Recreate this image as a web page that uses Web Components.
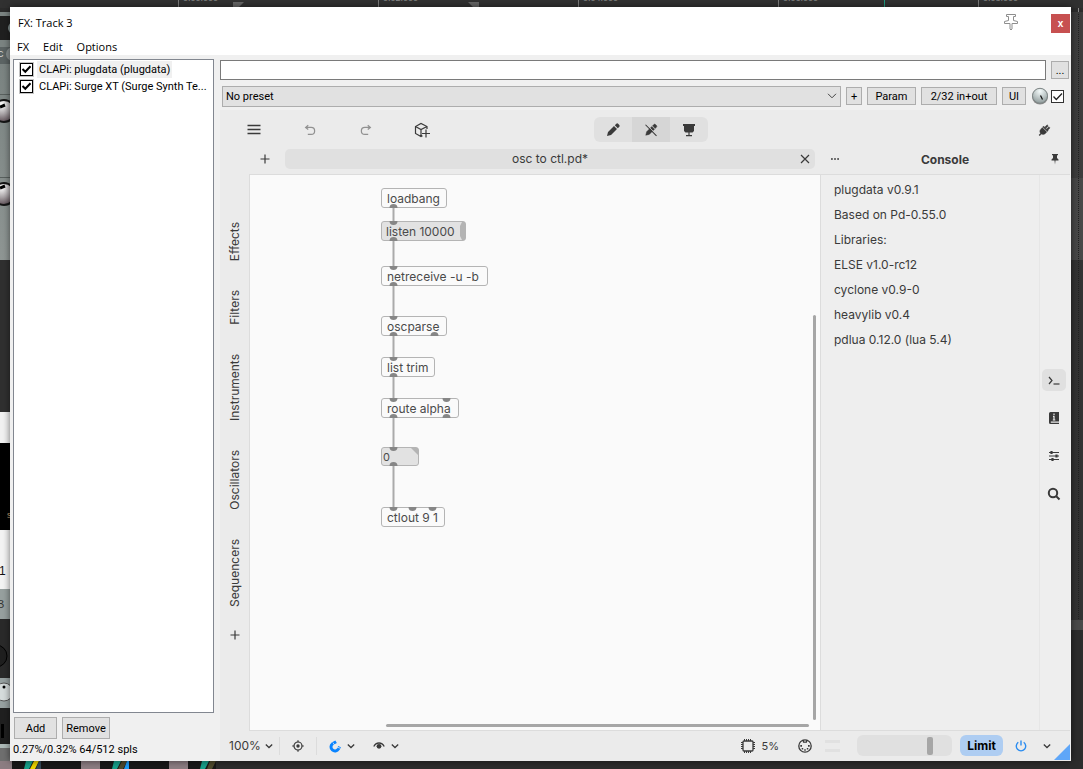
<!DOCTYPE html>
<html lang="en">
<head>
<meta charset="utf-8">
<title>FX: Track 3</title>
<style>
  html, body { height: 100%; margin: 0; }
  body { background: #2d2d2d; overflow: hidden; font-family: Roboto, "Liberation Sans", sans-serif; font-size: 11px; color: #000; }
</style>
</head>
<body>
<fx-desktop>
  <fx-window>
    <fx-titlebar slot="title">FX: Track 3</fx-titlebar>
    <fx-chain slot="chain" status="0.27%/0.32% 64/512 spls">
      <fx-item selected>CLAPi: plugdata (plugdata)</fx-item>
      <fx-item>CLAPi: Surge XT (Surge Synth Te...</fx-item>
    </fx-chain>
    <fx-presetbar slot="preset"></fx-presetbar>
    <pd-editor slot="plugin"></pd-editor>
  </fx-window>
</fx-desktop>

<script>
const RESET = `
  *, *::before, *::after { box-sizing: border-box; }
  button, input, select { font: inherit; color: inherit; margin: 0; }
  button { padding: 0; border: 0; background: none; display: grid; place-items: center; }
  svg { display: block; }
`;

function define(name, css, html) {
  const template = document.createElement('template');
  template.innerHTML = `<style>${RESET}${css}</style>${typeof html === 'string' ? html : ''}`;
  customElements.define(name, class extends HTMLElement {
    connectedCallback() {
      if (this.shadowRoot) return;
      const root = this.attachShadow({ mode: 'open' });
      root.append(template.content.cloneNode(true));
      if (typeof html === 'function') root.innerHTML += html(this);
    }
  });
}

/* ---------- icons ---------- */
const ICONS = {
  menu: '<path d="M1.500 3.500h13M1.500 7.500h13M1.500 11.500h13" stroke-width="1.500"/>',
  undo: '<path d="M6 2.500L3 5l3 2.500M3.500 5H9.300a4 4 0 0 1 0 8H5.500" stroke-width="1.400"/>',
  redo: '<path d="M10 2.500L13 5l-3 2.500M12.500 5H6.700a4 4 0 0 0 0 8H10.500" stroke-width="1.400"/>',
  cube: '<path d="M13 7V4.500L7 1.500 1.500 4.500v7L7 14.500l1.500-.8M1.500 4.500L7 7.500l6-3M7 7.500v7M12 7.500v8M8 11.500h8" stroke-width="1.200"/>',
  pencil: '<path d="M2 14l1-4 6-6 3 3-6 6zM9.800 3.200l1.500-1.500a1.300 1.300 0 0 1 1.800 0l1.200 1.200a1.300 1.300 0 0 1 0 1.800L12.800 6.200z" fill="currentColor" stroke="none"/>',
  pencilOff: '<path d="M2 14l1-4 6-6 3 3-6 6zM9.800 3.200l1.500-1.500a1.300 1.300 0 0 1 1.800 0l1.200 1.200a1.300 1.300 0 0 1 0 1.800L12.800 6.200z" fill="currentColor" stroke="currentColor" stroke-width=".5"/><path d="M2.600 1.400l12.500 12.500" stroke="#d6d6d6" stroke-width="1"/><path d="M1.700 2l12.600 12.600" stroke-width="1.200"/>',
  present: '<path d="M2 2h12v2h-1v5l-1.500 1.500h-7L3 9V4H2zM7.400 10h1.200v3H11v1.200H5V13h2.400z" fill="currentColor" stroke="none"/>',
  plug: '<path d="M2.200 13.800l1.800-2C2.500 9.500 3.200 8 5 6.200l1-1 5.200 5.200-1 1c-1.800 1.700-3.500 2.300-5.200 1.200l-1.800 1.900zM6.500 4.500l5.300 5.300 1-1-5.300-5.300zM9 4.600l2.600-2.600 1.300 1.300-2.600 2.600zM11 6.900l2.600-2.600 1.300 1.300-2.600 2.600z" fill="currentColor" stroke="currentColor" stroke-width=".4"/>',
  plus: '<path d="M8 3.500v9M3.500 8h9" stroke-width="1.200"/>',
  close: '<path d="M4 4l8 8M12 4l-8 8" stroke-width="1.200"/>',
  dots: '<path d="M4 7.300h1.800v1.500H4zM7.100 7.300h1.800v1.500H7.100zM10.200 7.300H12v1.500h-1.800z" fill="currentColor" stroke="none"/>',
  pin: '<path d="M5 3h6v1.300h-1V7l1.500 1.500v1h-3L8 13.500l-.5-4h-3v-1L6 7V4.300H5z" fill="currentColor" stroke="none"/>',
  terminal: '<path d="M3 5l3 3.500L3 12" stroke-width="1.200"/><path d="M7.500 12H13.500" stroke-width="1.200"/>',
  book: '<path d="M4.500 2H13v9.600H4.800v1.200H13V14H4.500A1.500 1.500 0 0 1 3 12.500v-9A1.500 1.500 0 0 1 4.500 2z" fill="currentColor" stroke="none"/><path d="M8 3.500v1.400M8 5.800V10M7 6.300h1M6.800 10h2.500" stroke="#eee" stroke-width="1.200"/>',
  sliders: '<path d="M3 4.500h10M3 8h10M3 11.500h10" stroke-width="1.200"/><path d="M5.500 3v3M10.500 6.500v3M6.500 10v3" stroke-width="2.200"/>',
  search: '<circle cx="7" cy="7" r="4.200" stroke-width="2"/><path d="M10 10l3.500 3.500" stroke-width="2"/>',
  chevron: '<path d="M4.800 6.500L8 9.500l3.200-3" stroke-width="1.300"/>',
  target: '<circle cx="8" cy="8" r="4" stroke-width="1.200"/><circle cx="8" cy="8" r="1.700" fill="currentColor" stroke="none"/><path d="M8 2.200v2M8 11.800v2M2.200 8h2M11.800 8h2" stroke-width="1.200"/>',
  magnet: '<path d="M8.500 3.600L5.200 6.200a4 4 0 1 0 6.600 4.300l.8-2.500" stroke-width="3" transform="rotate(8 8 8)"/><path d="M5.800 4.600l2 2.500M9.800 9l3.400 1.200" stroke="#ebebeb" stroke-width=".8"/>',
  eye: '<path d="M2.800 8.500C5 3.800 11 3.800 13.200 8.500" stroke-width="1.300"/><circle cx="8" cy="8.300" r="2.400" fill="currentColor" stroke="none"/>',
  cpu: '<rect x="3" y="3" width="10" height="10" rx="1" stroke-width="1.300"/><path d="M4.500 1v2M6.500 1v2M8.500 1v2M10.500 1v2M4.500 13v2M6.500 13v2M8.500 13v2M10.500 13v2M1 4.500h2M1 6.500h2M1 8.500h2M1 10.500h2M13 4.500h2M13 6.500h2M13 8.500h2M13 10.500h2"/>',
  midi: '<circle cx="8" cy="8" r="6.200" stroke-width="1.300"/><path d="M6 1.800l.6 2.400h2.800l.6-2.400" stroke-width="1.200"/><path d="M3.300 7h1.700v1.700H3.300zM11 7h1.700v1.700H11zM4.700 10h1.500v1.500H4.700zM9.800 10h1.500v1.500H9.800zM7.250 11.200h1.500v1.500h-1.500z" fill="currentColor" stroke="none"/>',
  power: '<path d="M5.300 4.300a4.700 4.700 0 1 0 5.400 0M8 2.500v5" stroke-width="1.400"/>',
};

customElements.define('ui-icon', class extends HTMLElement {
  connectedCallback() {
    if (this.shadowRoot) return;
    const size = this.getAttribute('size') || 16;
    this.attachShadow({ mode: 'open' }).innerHTML = `
      <style>:host { display: block; } svg { display: block; }</style>
      <svg width="${size}" height="${size}" viewBox="0 0 16 16" fill="none" stroke="currentColor" aria-hidden="true">${ICONS[this.getAttribute('name')] || ''}</svg>`;
  }
});

/* ---------- desktop with the DAW showing round the window ---------- */
define('fx-desktop', `
  :host { display: grid; height: 100vh; grid-template: 7px minmax(0, 1fr) 8px / 10px minmax(0, 1fr) 12px; overflow: hidden; }
  .daw { grid-area: 1 / 1 / -1 / -1; width: 100%; height: 100%; }
  .daw text { font: 9px "Liberation Sans", sans-serif; fill: #8c8c8c; }
  slot { display: contents; }
  ::slotted(*) { grid-area: 2 / 2; z-index: 1; }
`, `
  <svg class="daw" aria-hidden="true">
    <defs>
      <radialGradient id="k" cx=".4" cy=".2" r=".9"><stop offset="0" stop-color="#fff"/><stop offset=".5" stop-color="#a9a3a6"/><stop offset="1" stop-color="#4b3a42"/></radialGradient>
      <linearGradient id="g" x1="0" x2="0" y1="0" y2="1"><stop offset="0" stop-color="#7b8482"/><stop offset="1" stop-color="#8f9694"/></linearGradient>
    </defs>
    <rect width="100%" height="100%" fill="#2c2c2c"/>
    <rect width="100%" height="8" fill="#313131"/>
    <path d="M178.500 0v7M378.500 0v7M578.500 0v7M778.500 0v7M978.500 0v7" stroke="#7c7c7c"/>
    <path d="M884.500 0v7" stroke="#1f9a80"/>
    <path d="M233 2h11l-5 5h-6zM468 2h11v5h-6z" fill="#666"/>
    <text x="183" y="1">0:00.000</text><text x="383" y="1">0:02.000</text><text x="583" y="1">0:04.000</text><text x="783" y="1">0:06.000</text><text x="983" y="1">0:08.000</text>
    <rect y="12" width="10" height="4" fill="#7b8482"/>
    <rect y="16" width="10" height="24" fill="#202020"/><circle cx="14" cy="28" r="6" fill="#7f8d8d"/>
    <rect y="40" width="10" height="7" fill="#7b8482"/>
    <rect y="47" width="10" height="17" fill="#5c6464"/><circle cx="13" cy="54" r="7" fill="#8a9292"/>
    <text x="-3" y="57" style="fill:#ddd">C</text>
    <rect y="64" width="10" height="197" fill="url(#g)"/>
    <path d="M0 94.500h10M0 177.500h10" stroke="#59605e"/>
    <circle cx="4" cy="111" r="11" fill="url(#k)" stroke="#161616" stroke-width="2"/>
    <circle cx="4" cy="194" r="11" fill="url(#k)" stroke="#161616" stroke-width="2"/>
    <path d="M0 107l5-2M0 188l5-2" stroke="#000" stroke-width="3"/>
    <rect y="260" width="10" height="152" fill="#303030"/>
    <rect y="412" width="10" height="31" fill="#f2f2f2"/>
    <rect y="443" width="10" height="87" fill="#000"/>
    <text x="7" y="518" style="fill:#c8a070">s</text>
    <rect y="530" width="10" height="59" fill="#f4f4f4"/>
    <text x="-1" y="575" style="font-size:12px;fill:#111">1</text>
    <rect y="589" width="10" height="30" fill="#97a09f"/>
    <text x="-3" y="608" style="font-size:11px;fill:#333">B</text>
    <rect y="619" width="10" height="59" fill="#2a2a2a"/><circle cx="-4" cy="656" r="11" fill="#1f1f1f" stroke="#000"/>
    <rect y="678" width="10" height="30" fill="#97a1a1"/><circle cx="4" cy="692" r="9" fill="#d6dcdc" stroke="#555"/><circle cx="4" cy="687" r="1.500"/>
    <rect y="708" width="10" height="36" fill="#202020"/><path d="M2.500 724v14" stroke="#000" stroke-width="3"/>
    <rect y="744" width="10" height="4" fill="#aebab8"/><rect y="748" width="10" height="13" fill="#6f6f6f"/>
    <g>
      <rect y="761" width="216" height="8" fill="#181818"/>
      <path d="M0 761h12v8H0zM81 761h19v8H81zM169 761h19v8h-19z" fill="#8c7d82"/>
      <path d="M26 761h7l-4 8h-5zM114 761h7l-4 8h-5zM202 761h7l-4 8h-5z" fill="#17a08a"/>
      <path d="M34 761h5l-4 8h-5z" fill="#ecd400"/><path d="M39 761h2v8h-5z" fill="#34495a"/>
      <path d="M122 761h5l-4 8h-5zM210 761h6l-4 8h-5z" fill="#4f4a2d"/><path d="M127 761h2v8h-5z" fill="#1e9bf4"/>
    </g>
    <svg x="100%" overflow="visible">
      <rect x="-12" y="12" width="12" height="166" fill="#3d3d3d"/>
      <rect x="-12" y="178" width="12" height="82" fill="#484848"/>
      <rect x="-12" y="260" width="12" height="360" fill="#333"/>
      <rect x="-12" y="620" width="12" height="10" fill="#4a4a4a"/>
      <path d="M-4.500 14v606" stroke="#222" stroke-dasharray="1 1"/>
      <path d="M-4.500 8v4" stroke="#888"/>
    </svg>
  </svg>
  <slot></slot>
`);

/* ---------- window frame ---------- */
define('fx-window', `
  :host { display: grid; min-width: 0; min-height: 0; background: #f0f0f0; box-shadow: 0 0 7px rgba(0, 0, 0, .55);
    grid-template: 48px 55px minmax(0, 1fr) / 204px minmax(0, 1fr); column-gap: 6px; }
  slot { display: contents; }
  ::slotted([slot=title]) { grid-area: 1 / 1 / 2 / 3; }
  ::slotted([slot=chain]) { grid-area: 2 / 1 / 4 / 2; }
  ::slotted([slot=preset]) { grid-area: 2 / 2; }
  ::slotted([slot=plugin]) { grid-area: 3 / 2; }
`, `<slot name="title"></slot><slot name="chain"></slot><slot name="preset"></slot><slot name="plugin"></slot>`);

define('fx-titlebar', `
  :host { display: grid; grid-template-rows: 30px 18px; background: #fff; font-family: "Open Sans", "Noto Sans", sans-serif; font-size: 11px; }
  header { display: flex; align-items: center; padding-left: 8px; }
  .title { flex: 1; }
  .pin { margin-right: 32px; }
  .close { width: 19px; height: 19px; margin: 2px 1px 0 0; background: #c75050; color: #fff; font: bold 10px "Liberation Sans", sans-serif; }
  nav { display: flex; align-items: center; gap: 14px; padding: 1px 0 0 7px; }
`, `
  <header>
    <span class="title"><slot></slot></span>
    <button class="pin" aria-label="Pin window"><svg width="16" height="18" viewBox="0 0 16 18" fill="#fff" stroke="#8e8e8e"><path d="M3.500 1.500h9v2h-2v4l4 1v2h-5.500V16l-1 1-1-1v-5.500H1.500v-2l4-1v-4h-2z"/></svg></button>
    <button class="close" aria-label="Close">x</button>
  </header>
  <nav><button>FX</button><button>Edit</button><button>Options</button></nav>
`);

/* ---------- effect chain ---------- */
define('fx-chain', `
  :host { display: grid; grid-template-rows: minmax(0, 1fr) auto auto; padding: 4px 0 3px 3px; min-height: 0; }
  .list { background: #fff; border: 1px solid #828790; padding: 1px 0; overflow: hidden; }
  .buttons { display: flex; gap: 5px; padding: 4px 1px 3px; }
  .buttons button { height: 22px; border: 1px solid #adadad; background: #e1e1e1; }
  .add { width: 43px; } .remove { width: 48px; }
  .status { line-height: 16px; white-space: nowrap; }
`, host => `
  <div class="list"><slot></slot></div>
  <div class="buttons"><button class="add">Add</button><button class="remove">Remove</button></div>
  <div class="status">${host.getAttribute('status')}</div>
`);

define('fx-item', `
  :host { display: block; padding-left: 6px; }
  label { display: flex; align-items: center; height: 17px; gap: 4px; white-space: nowrap; }
  input { appearance: none; flex: none; width: 13px; height: 13px; border: 1px solid #000; box-shadow: 0 0 0 1px #c4c4c4; background: #fff
    url("data:image/svg+xml,%3Csvg xmlns='http://www.w3.org/2000/svg' viewBox='0 0 12 12'%3E%3Cpath d='M2 5.500l2.800 2.800 5.200-5.500' fill='none' stroke='%23000' stroke-width='2'/%3E%3C/svg%3E") center / 12px 12px; }
  span { line-height: 17px; padding: 0 2px; }
  :host([selected]) span { background: #f0f0f0; padding-right: 2px; }
`, `<label><input type="checkbox" checked><span><slot></slot></span></label>`);

/* ---------- preset and routing row ---------- */
define('fx-presetbar', `
  :host { display: grid; grid-template-rows: 20px 22px; row-gap: 5px; padding: 5px 2px 0 0; align-content: start; }
  .row { display: flex; align-items: center; min-width: 0; }
  .comment { flex: 1; min-width: 0; height: 20px; border: 1px solid #7a7a7a; background: #fff; padding: 0 4px; border-radius: 0; }
  button, select { border: 1px solid #adadad; background: #e1e1e1; }
  .more { width: 18px; height: 18px; margin-left: 5px; }
  .preset { padding-left: 2px; }
  .preset button { height: 18px; margin-left: 5px; }
  select { appearance: none; flex: 1; min-width: 0; height: 21px; padding: 0 3px; border-radius: 0; background: #e1e1e1
    url("data:image/svg+xml,%3Csvg xmlns='http://www.w3.org/2000/svg' viewBox='0 0 10 6'%3E%3Cpath d='M1 .8l4 4 4-4' fill='none' stroke='%23444'/%3E%3C/svg%3E") no-repeat right 3px center / 10px 6px; }
  .plus { width: 16px; } .param { width: 49px; } .io { width: 76px; } .ui { width: 24px; }
  .knob { margin: 0 2px 0 5px; }
  input[type=checkbox] { appearance: none; width: 13px; height: 13px; margin-right: 5px; border: 1px solid #333; background: #fff
    url("data:image/svg+xml,%3Csvg xmlns='http://www.w3.org/2000/svg' viewBox='0 0 12 12'%3E%3Cpath d='M2 6l2.800 3L10.500 3' fill='none' stroke='%23222' stroke-width='1.300'/%3E%3C/svg%3E") center / 12px 12px; }
`, `
  <div class="row"><input class="comment" aria-label="FX comment"><button class="more" aria-label="More">...</button></div>
  <div class="row preset">
    <select aria-label="Preset"><option>No preset</option></select>
    <button class="plus">+</button><button class="param">Param</button><button class="io">2/32 in+out</button><button class="ui">UI</button>
    <svg class="knob" width="18" height="18" viewBox="0 0 18 18" role="img" aria-label="Wet/dry mix">
      <defs><radialGradient id="w" cx=".5" cy=".2" r=".8"><stop offset="0" stop-color="#f4fafa"/><stop offset="1" stop-color="#8f9b9b"/></radialGradient></defs>
      <circle cx="9" cy="9.500" r="8" fill="#8c8c8c"/><circle cx="9" cy="8.800" r="7.500" fill="url(#w)" stroke="#7d8585"/><path d="M9.500 8.500l2 4" stroke="#111" stroke-width="1.300"/>
    </svg>
    <input type="checkbox" checked aria-label="Enable effect">
  </div>
`);

/* ---------- plugdata editor ---------- */
define('pd-editor', `
  :host { display: grid; min-width: 0; min-height: 0; margin-right: 1px; background: #ebebeb; color: #3a3a3a; font-family: Inter, "Liberation Sans", sans-serif; font-size: 12px;
    grid-template: 39px 25px minmax(0, 1fr) 30px / 29px minmax(0, 1fr) 250px; }
  pd-toolbar { grid-area: 1 / 1 / 2 / 4; }
  pd-tabs { grid-area: 2 / 1 / 3 / 3; }
  pd-panel-header { grid-area: 2 / 3; }
  pd-palettes { grid-area: 3 / 1; }
  pd-canvas { grid-area: 3 / 2; }
  pd-console { grid-area: 3 / 3; }
  pd-statusbar { grid-area: 4 / 1 / 5 / 4; }
`, `
  <pd-toolbar></pd-toolbar><pd-tabs></pd-tabs><pd-panel-header></pd-panel-header>
  <pd-palettes></pd-palettes>
  <pd-canvas>
    <pd-object x="131" y="13" width="66" outs="12">loadbang</pd-object>
    <pd-object x="131" y="46" width="85" ins="12" outs="12" kind="message">listen 10000</pd-object>
    <pd-object x="131" y="91" width="107" ins="12" outs="12">netreceive -u -b</pd-object>
    <pd-object x="131" y="141" width="66" ins="12" outs="12 53">oscparse</pd-object>
    <pd-object x="131" y="182" width="54" ins="12" outs="12">list trim</pd-object>
    <pd-object x="131" y="223" width="78" ins="12 65" outs="12 65">route alpha</pd-object>
    <pd-object x="131" y="272" width="38" ins="12" outs="12" kind="number">0</pd-object>
    <pd-object x="131" y="332" width="64" ins="12 31 51">ctlout 9 1</pd-object>
  </pd-canvas>
  <pd-console></pd-console><pd-statusbar></pd-statusbar>
`);

define('pd-toolbar', `
  :host { display: grid; grid-template-columns: 1fr auto 1fr; align-items: center; padding-left: 12px; }
  .group { display: flex; gap: 12px; }
  .group button { width: 44px; height: 28px; }
  .dim { color: #919191; }
  .modes { display: flex; border-radius: 6px; background: #e0e0e0; overflow: hidden; }
  .modes button { width: 38px; height: 25px; }
  .modes .on { background: #d6d6d6; }
  .plug { width: 52px; height: 28px; justify-self: end; }
`, `
  <div class="group">
    <button aria-label="Main menu"><ui-icon name="menu"></ui-icon></button>
    <button class="dim" aria-label="Undo"><ui-icon name="undo" size="14"></ui-icon></button>
    <button class="dim" aria-label="Redo"><ui-icon name="redo" size="14"></ui-icon></button>
    <button aria-label="Add object"><ui-icon name="cube"></ui-icon></button>
  </div>
  <div class="modes">
    <button aria-label="Edit mode"><ui-icon name="pencil"></ui-icon></button>
    <button class="on" aria-label="Run mode"><ui-icon name="pencilOff" size="14"></ui-icon></button>
    <button aria-label="Presentation mode"><ui-icon name="present"></ui-icon></button>
  </div>
  <button class="plug" aria-label="Plugin mode"><ui-icon name="plug" size="14"></ui-icon></button>
`);

define('pd-tabs', `
  :host { display: flex; align-items: flex-start; padding: 0 5px 0 27px; min-width: 0; }
  .new { width: 36px; height: 20px; margin-right: 2px; }
  .tab { flex: 1; min-width: 0; display: flex; align-items: center; height: 20px; border-radius: 5px; background: #e0e0e0; }
  .name { flex: 1; text-align: center; line-height: 20px; padding-left: 20px; }
  .close { width: 20px; height: 20px; }
`, `
  <button class="new" aria-label="New tab"><ui-icon name="plus"></ui-icon></button>
  <div class="tab"><span class="name">osc to ctl.pd*</span><button class="close" aria-label="Close tab"><ui-icon name="close"></ui-icon></button></div>
`);

define('pd-panel-header', `
  :host { display: flex; align-items: flex-start; }
  button { width: 30px; height: 20px; }
  h2 { flex: 1; margin: 0; font-size: 12px; line-height: 22px; font-weight: 700; text-align: center; }
`, `
  <button aria-label="Panel options"><ui-icon name="dots"></ui-icon></button>
  <h2>Console</h2>
  <button aria-label="Pin panel"><ui-icon name="pin"></ui-icon></button>
`);

define('pd-palettes', `
  :host { display: flex; flex-direction: column; align-items: center; gap: 29px; padding: 48px 0 0 1px; }
  .palette { writing-mode: vertical-rl; transform: rotate(180deg); width: 20px; line-height: 20px; display: block; }
  .add { width: 24px; height: 16px; margin-top: -9px; }
`, `
  <button class="palette">Effects</button><button class="palette">Filters</button><button class="palette">Instruments</button>
  <button class="palette">Oscillators</button><button class="palette">Sequencers</button>
  <button class="add" aria-label="Add palette"><ui-icon name="plus"></ui-icon></button>
`);

define('pd-canvas', `
  :host { display: block; position: relative; overflow: hidden; background: #fafafa; border: 1px solid #dcdcdc; border-width: 1px 0 1px 1px; }
  .cords { position: absolute; inset: 0; width: 100%; height: 100%; }
  .bar { position: absolute; border-radius: 2px; background: #a6a6a6; }
  .v { right: 4px; top: 140px; bottom: 10px; width: 3px; }
  .h { left: 136px; right: 11px; bottom: 3px; height: 3px; }
`, `
  <svg class="cords" aria-hidden="true"><path d="M143.500 32V47M143.500 65V92M143.500 110V142M143.500 160V183M143.500 201V224M143.500 242V273M143.500 291V333" stroke="#aaa" stroke-width="2" fill="none"/></svg>
  <slot></slot>
  <div class="bar v"></div><div class="bar h"></div>
`);

/* A patch object; ins and outs list the port centres from its left edge. */
define('pd-object', `
  :host { position: absolute; display: block; }
  .box { height: 20px; border: 1px solid #b4b4b4; border-radius: 3px; background: #fafafa; color: #4a4a4a; padding-left: 5px; line-height: 20px; white-space: nowrap; }
  .message { background: #e2e2e2; padding-left: 4px; }
  .number { height: 19px; background: #e2e2e2; padding-left: 1px; line-height: 19px; font-size: 11px; }
  svg { position: absolute; inset: 0; width: 100%; height: 100%; overflow: hidden; }
`, host => {
  const list = name => (host.getAttribute(name) || '').split(' ').filter(Boolean);
  const kind = host.getAttribute('kind') || 'object';
  const w = +host.getAttribute('width');
  const h = kind === 'number' ? 19 : 20;
  host.style.left = host.getAttribute('x') + 'px';
  host.style.top = host.getAttribute('y') + 'px';
  host.style.width = w + 'px';
  const port = (x, y) => `<ellipse cx="${+x + .5}" cy="${y}" rx="4" ry="4" fill="#868686"/>`;
  const extra = kind === 'message' ? `<path d="M${w - 1} 1h-3l-2 4v10l2 4h3z" fill="#b4b4b4"/>`
    : kind === 'number' ? `<path d="M${w - 8} 1h7v7z" fill="#b4b4b4"/>` : '';
  return `<div class="box ${kind}"><slot></slot></div>
    <svg aria-hidden="true">${extra}${list('ins').map(x => port(x, 0)).join('')}${list('outs').map(x => port(x, h)).join('')}</svg>`;
});

define('pd-console', `
  :host { display: grid; grid-template-columns: minmax(0, 1fr) 31px; background: #eee; border: 1px solid #dcdcdc; border-right: 0; }
  ul { list-style: none; margin: 0; padding: 2px 13px; line-height: 25px; }
  nav { display: flex; flex-direction: column; align-items: center; gap: 16px; padding: 194px 2px 0 0; border-left: 1px solid #e6e6e6; }
  nav button { width: 24px; height: 22px; border-radius: 5px; }
  nav .on { background: #e0e0e0; }
`, `
  <ul><li>plugdata v0.9.1</li><li>Based on Pd-0.55.0</li><li>Libraries:</li><li>ELSE v1.0-rc12</li><li>cyclone v0.9-0</li><li>heavylib v0.4</li><li>pdlua 0.12.0 (lua 5.4)</li></ul>
  <nav>
    <button class="on" aria-label="Console"><ui-icon name="terminal"></ui-icon></button>
    <button aria-label="Documentation"><ui-icon name="book"></ui-icon></button>
    <button aria-label="Automation"><ui-icon name="sliders"></ui-icon></button>
    <button aria-label="Search"><ui-icon name="search"></ui-icon></button>
  </nav>
`);

define('pd-statusbar', `
  :host { display: flex; align-items: center; position: relative; padding: 0 0 1px 9px; }
  .zoom, .drop { display: flex; align-items: center; height: 20px; }
  .sep { width: 1px; height: 18px; background: #dcdcdc; }
  .zoom { margin-right: 2px; }
  .target { width: 36px; height: 20px; }
  .snap { margin-left: 10px; }
  .snap ui-icon:first-child { color: #0a84ff; }
  .view { margin-left: 12px; }
  .space { flex: 1; }
  .cpu { display: flex; align-items: center; gap: 6px; font-size: 11px; }
  .midi { margin-left: 18px; }
  .meter { display: grid; gap: 6px; width: 15px; margin-left: 12px; }
  .meter i { height: 3px; background: #e1e1e1; }
  input { appearance: none; width: 95px; height: 21px; margin-left: 17px; border-radius: 6px; background: #e0e0e0; padding: 0 1px; }
  input::-webkit-slider-thumb { appearance: none; width: 6px; height: 18px; border-radius: 2px; background: #a6a6a6; }
  .limit { width: 43px; height: 21px; margin: 0 10px 0 8px; border-radius: 6px; background: #aecdf2; color: #000; font-weight: 700; }
  .power { color: #2a8cf0; }
  .more { margin: 0 15px 0 10px; }
  .grip { position: absolute; right: 0; bottom: 1px; width: 16px; height: 16px; background: #5ea6f8; clip-path: polygon(100% 0, 100% 100%, 0 100%); }
`, `
  <button class="zoom">100%<ui-icon name="chevron"></ui-icon></button>
  <span class="sep"></span>
  <button class="target" aria-label="Centre view"><ui-icon name="target"></ui-icon></button>
  <span class="sep"></span>
  <button class="drop snap" aria-label="Snapping"><ui-icon name="magnet"></ui-icon><ui-icon name="chevron"></ui-icon></button>
  <button class="drop view" aria-label="View options"><ui-icon name="eye"></ui-icon><ui-icon name="chevron"></ui-icon></button>
  <span class="space"></span>
  <span class="cpu"><ui-icon name="cpu"></ui-icon>5%</span>
  <ui-icon class="midi" name="midi"></ui-icon>
  <span class="meter"><i></i><i></i></span>
  <input type="range" min="0" max="100" value="79" aria-label="Volume">
  <button class="limit">Limit</button>
  <button class="power" aria-label="DSP on"><ui-icon name="power"></ui-icon></button>
  <button class="more" aria-label="Audio options"><ui-icon name="chevron"></ui-icon></button>
  <span class="grip"></span>
`);
</script>
</body>
</html>
